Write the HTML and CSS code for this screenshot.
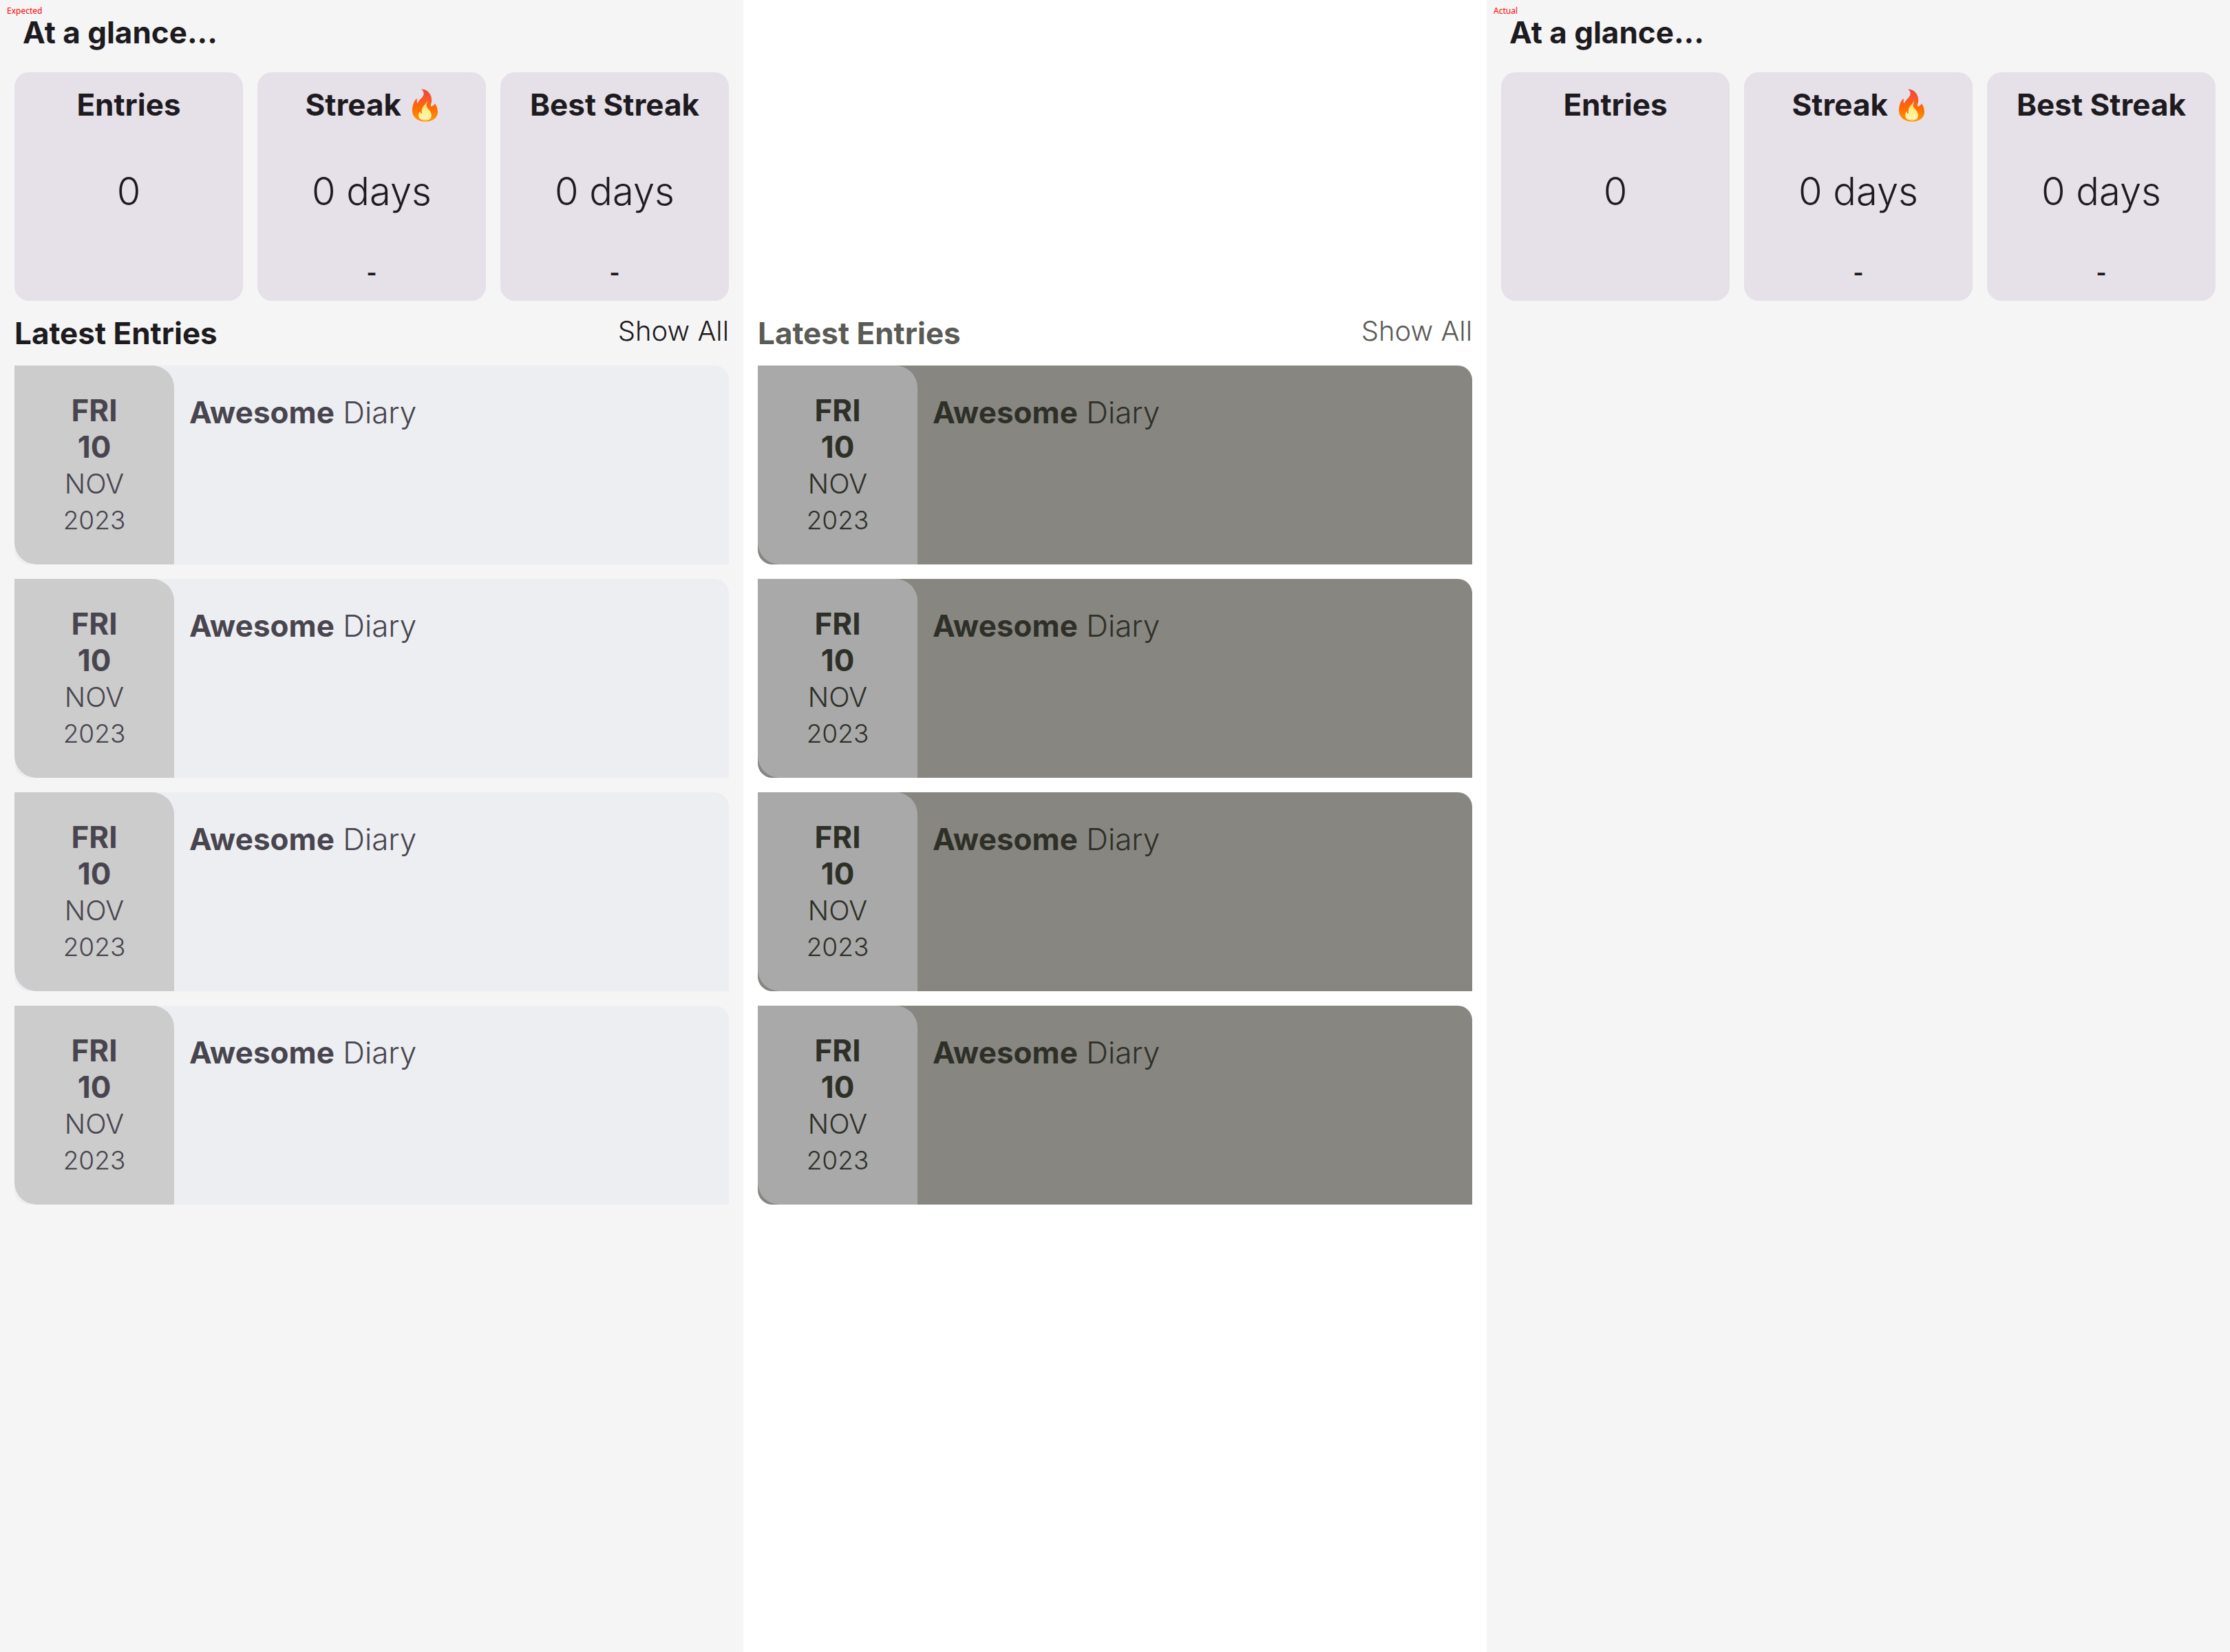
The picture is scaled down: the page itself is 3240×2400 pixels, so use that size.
FILE: index.html
```
<!DOCTYPE html>
<html lang="en">
<head>
<meta charset="utf-8">
<title>Diary overview comparison</title>
<link rel="stylesheet" href="styles.css">
</head>
<body>
<svg class="defs" width="0" height="0" aria-hidden="true">
  <defs>
    <linearGradient id="flame-outer" x1="0" y1="0" x2="0" y2="1">
      <stop offset="0" stop-color="#f0423c"/>
      <stop offset="0.3" stop-color="#f9572a"/>
      <stop offset="0.6" stop-color="#ff6d00"/>
      <stop offset="1" stop-color="#ff9800"/>
    </linearGradient>
    <linearGradient id="flame-inner" x1="0" y1="0" x2="0" y2="1">
      <stop offset="0" stop-color="#ffe262"/>
      <stop offset="0.75" stop-color="#fff3a0"/>
      <stop offset="0.9" stop-color="#fff0c0"/>
      <stop offset="1" stop-color="#ffc53a"/>
    </linearGradient>
    <symbol id="flame" viewBox="0 0 109 141">
      <path fill="url(#flame-outer)" d="M39 2C62 0 86 22 83 54C82 62 78 68 79 73C82 78 92 72 97 63C103 70 109 84 109 99C109 124 86 140 56 140C25 140 0 122 0 93C0 70 8 51 19 41C21 46 18 55 22 62C25 60 26 55 30 50C38 40 50 32 49 19C49 12 45 6 39 2Z"/>
      <path fill="url(#flame-inner)" d="M64 50C66 57 60 64 61 73C63 87 82 93 82 113C82 128 71 136 56 136C40 136 27 127 27 113C27 106 29 99 33 96C35 99 34 105 38 106C44 106 38 96 42 85C46 72 60 66 64 50Z"/>
    </symbol>
  </defs>
</svg>
<main class="board">
  <section class="panel">
    <p class="tag">Expected</p>
    <h1 class="title">At a glance...</h1>
    <div class="stats">
      <article class="stat"><h2>Entries</h2><p class="value">0</p><p class="range"></p></article>
      <article class="stat"><h2>Streak <svg class="flame" role="img" aria-label="fire"><use href="#flame"/></svg></h2><p class="value">0 days</p><p class="range">-</p></article>
      <article class="stat"><h2>Best Streak</h2><p class="value">0 days</p><p class="range">-</p></article>
    </div>
    <header class="bar"><h2>Latest Entries</h2><button type="button">Show All</button></header>
    <ul class="entries">
      <li class="entry"><div class="date"><b>FRI</b><b>10</b><span class="month">NOV</span><span>2023</span></div><p class="text"><b>Awesome</b> Diary</p></li>
      <li class="entry"><div class="date"><b>FRI</b><b>10</b><span class="month">NOV</span><span>2023</span></div><p class="text"><b>Awesome</b> Diary</p></li>
      <li class="entry"><div class="date"><b>FRI</b><b>10</b><span class="month">NOV</span><span>2023</span></div><p class="text"><b>Awesome</b> Diary</p></li>
      <li class="entry"><div class="date"><b>FRI</b><b>10</b><span class="month">NOV</span><span>2023</span></div><p class="text"><b>Awesome</b> Diary</p></li>
    </ul>
  </section>
  <section class="panel diff">
    <header class="bar"><h2>Latest Entries</h2><button type="button">Show All</button></header>
    <ul class="entries">
      <li class="entry"><div class="date"><b>FRI</b><b>10</b><span class="month">NOV</span><span>2023</span></div><p class="text"><b>Awesome</b> Diary</p></li>
      <li class="entry"><div class="date"><b>FRI</b><b>10</b><span class="month">NOV</span><span>2023</span></div><p class="text"><b>Awesome</b> Diary</p></li>
      <li class="entry"><div class="date"><b>FRI</b><b>10</b><span class="month">NOV</span><span>2023</span></div><p class="text"><b>Awesome</b> Diary</p></li>
      <li class="entry"><div class="date"><b>FRI</b><b>10</b><span class="month">NOV</span><span>2023</span></div><p class="text"><b>Awesome</b> Diary</p></li>
    </ul>
  </section>
  <section class="panel">
    <p class="tag">Actual</p>
    <h1 class="title">At a glance...</h1>
    <div class="stats">
      <article class="stat"><h2>Entries</h2><p class="value">0</p><p class="range"></p></article>
      <article class="stat"><h2>Streak <svg class="flame" role="img" aria-label="fire"><use href="#flame"/></svg></h2><p class="value">0 days</p><p class="range">-</p></article>
      <article class="stat"><h2>Best Streak</h2><p class="value">0 days</p><p class="range">-</p></article>
    </div>
  </section>
</main>
</body>
</html>
```
FILE: styles.css
```
* { box-sizing: border-box; }

body {
  margin: 0;
  font-family: "Inter", "Liberation Sans", sans-serif;
  font-size: 44px;
  line-height: 54px;
  color: #1d1b20;
}

h1, h2, p, ul { margin: 0; padding: 0; font-size: inherit; }
h1, h2, b { font-weight: 700; }

.defs { position: absolute; }

.board {
  display: grid;
  grid-template-columns: repeat(3, 1fr);
  min-height: 100vh;
}

.panel {
  position: relative;
  padding: 20px 21px;
  background: #f5f5f5;
}

.tag {
  position: absolute;
  left: 10px;
  top: 8px;
  font: 12px/16px "Noto Sans", sans-serif;
  color: #ff0000;
}

.title { padding-left: 12px; }

.stats {
  display: grid;
  grid-template-columns: repeat(3, 1fr);
  gap: 21px;
  margin-top: 31px;
}

.stat {
  display: flex;
  flex-direction: column;
  justify-content: space-between;
  align-items: center;
  aspect-ratio: 1;
  padding: 20px;
  border-radius: 21px;
  background: #e6e0e9;
  white-space: nowrap;
}

.stat h2 { height: 54px; }

.flame {
  width: 37px;
  height: 48px;
  margin-left: 6px;
  vertical-align: -9px;
}

.value { font-size: 56px; line-height: 66px; font-weight: 300; }
.range { min-height: 40px; font-size: 32px; line-height: 40px; font-weight: 700; }

.bar {
  display: flex;
  justify-content: space-between;
  align-items: flex-start;
  padding: 20px 0;
}

.bar button {
  padding: 0;
  border: 0;
  background: none;
  color: inherit;
  font: 300 40px/48px "Inter", "Liberation Sans", sans-serif;
}

.entries {
  display: grid;
  gap: 21px;
  list-style: none;
}

.entry {
  display: grid;
  grid-template-columns: 232px 1fr;
  border-radius: 0 21px 0 21px;
  background: #edeef2;
  color: #49454f;
}

.date {
  display: flex;
  flex-direction: column;
  align-items: center;
  padding: 39px 0 38px;
  border-radius: 0 32px 0 32px;
  background: #cccccc;
  font-size: 37px;
  line-height: 53px;
  font-weight: 300;
}

.date b { font-size: 44px; }
.date .month { font-size: 40px; }
.text { padding: 41px 22px; font-weight: 300; }

.diff {
  padding-top: 437px;
  background: #ffffff;
  color: #5a5b56;
}
.diff .entry { background: #888681; color: #2e3028; }
.diff .date { background: #a9a9a9; }
```
